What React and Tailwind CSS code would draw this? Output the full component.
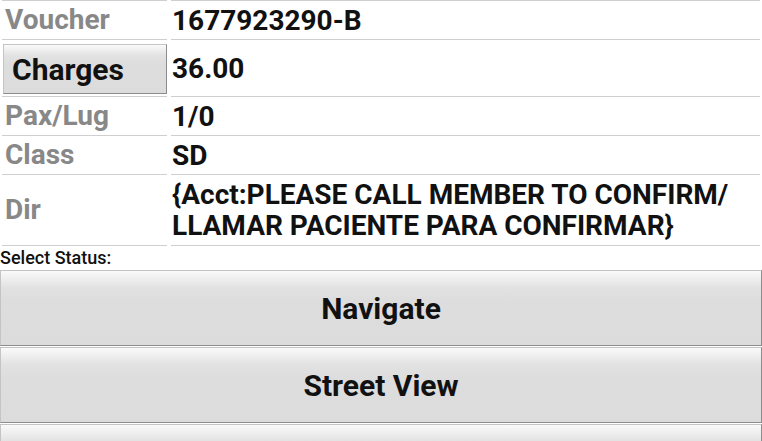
const rows = [
  { label: "Voucher", value: "1677923290-B", h: "h-[40px]", first: true },
  { label: "Charges", value: "36.00", h: "h-[57px]", button: true },
  { label: "Pax/Lug", value: "1/0", h: "h-[39px]" },
  { label: "Class", value: "SD", h: "h-[39px]" },
  {
    label: "Dir",
    value: "{Acct:PLEASE CALL MEMBER TO CONFIRM/ LLAMAR PACIENTE PARA CONFIRMAR}",
    h: "h-[71px]",
  },
];

const btnBg =
  "bg-[linear-gradient(#fafafa,#e2e2e2_22%,#dddddd_40%,#dcdcdc)] border border-[#c4c4c4] border-b-[#8c8c8c] border-r-[#8c8c8c]";

export default function App() {
  return (
    <div
      className="w-[762px] h-[441px] overflow-hidden bg-white text-[#111]"
      style={{ fontFamily: "Roboto, 'Liberation Sans', sans-serif" }}
    >
      {/* Info rows */}
      {rows.map((r) => (
        <div key={r.label} className={`flex gap-[4px] ${r.h}`}>
          <div
            className={`w-[165px] ml-[2px] shrink-0 flex items-center border-b border-[#cfcfcf] ${
              r.first ? "border-t" : ""
            }`}
          >
            {r.button ? (
              <div
                className={`w-[164px] h-[50px] ml-[1px] mt-[2px] flex items-center pl-[8px] text-[30px] font-bold text-[#111] ${btnBg}`}
              >
                Charges
              </div>
            ) : (
              <span className="pl-[3px] text-[28px] font-bold text-[#888888]">
                {r.label}
              </span>
            )}
          </div>
          <div
            className={`flex-1 mr-[2px] flex items-center border-b border-[#cfcfcf] ${
              r.first ? "border-t" : ""
            }`}
          >
            <span className="pl-[1px] text-[28px] leading-[31px] font-bold">
              {r.value}
            </span>
          </div>
        </div>
      ))}

      {/* Status */}
      <div className="h-[24px] flex items-center text-[18px] font-medium leading-none">
        Select Status:
      </div>

      <div className="flex flex-col gap-[1px]">
        {["Navigate", "Street View", ""].map((t, i) => (
          <button
            key={i}
            className={`w-full h-[76px] flex items-center justify-center text-[30px] font-bold text-[#111] ${btnBg}`}
          >
            {t}
          </button>
        ))}
      </div>
    </div>
  );
}
